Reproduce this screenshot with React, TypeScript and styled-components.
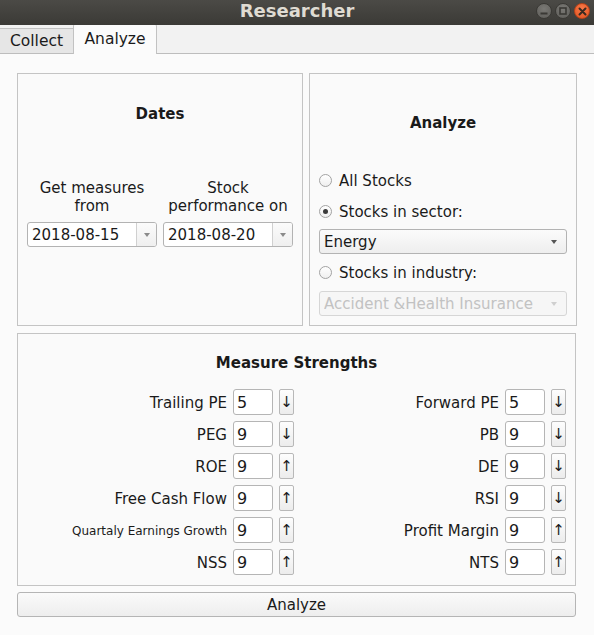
import React from "react";
import styled, { createGlobalStyle, css } from "styled-components";

const Global = createGlobalStyle`
  html, body { margin: 0; padding: 0; background: #fbfbfb; }
  body { font-family: "DejaVu Sans", "Liberation Sans", sans-serif; font-size: 15px; color: #1a1a1a; }
  * { box-sizing: border-box; }
`;

const Window = styled.div`
  width: 594px;
  height: 635px;
  display: flex;
  flex-direction: column;
  background: #fbfbfb;
  overflow: hidden;
`;

const TitleBar = styled.div`
  height: 25px;
  flex: none;
  background: linear-gradient(#4b4a46, #3b3a36);
  display: flex;
  align-items: center;
  justify-content: center;
  position: relative;
`;

const Title = styled.div`
  font-weight: bold;
  font-size: 18px;
  color: #dfdbd2;
  line-height: 20px;
  margin-top: -4px;
`;

const WinButtons = styled.div`
  position: absolute;
  right: 4px;
  top: 3px;
  display: flex;
  gap: 3px;
`;

const WinButton = styled.div<{ $close?: boolean }>`
  width: 16px;
  height: 16px;
  border-radius: 50%;
  display: flex;
  align-items: center;
  justify-content: center;
  ${(p) =>
    p.$close
      ? css`background: radial-gradient(circle at 50% 35%, #f77a4a, #e2531f); border: 1px solid #b8431a;`
      : css`background: radial-gradient(circle at 50% 35%, #7a7975, #5d5c58); border: 1px solid #3a3935;`}
`;

const TabBar = styled.div`
  height: 29px;
  flex: none;
  display: flex;
  align-items: flex-end;
  border-bottom: 1px solid #bdbdbd;
  background: #f2f2f2;
`;

const Tab = styled.div<{ $active?: boolean }>`
  display: flex;
  align-items: center;
  justify-content: center;
  font-size: 15.5px;
  border: 1px solid #c2c2c2;
  border-bottom: none;
  ${(p) =>
    p.$active
      ? css`
          height: 30px;
          width: 84px;
          background: #fbfbfb;
          margin-bottom: -1px;
          border-radius: 2px 2px 0 0;
          padding-bottom: 2px;
        `
      : css`
          height: 25px;
          width: 73px;
          background: #e6e6e6;
          border-left: none;
          border-right: none;
        `}
`;

const Content = styled.div`
  flex: 1;
  padding: 19px 18px 0 17px;
  display: flex;
  flex-direction: column;
`;

const TopRow = styled.div`
  display: grid;
  grid-template-columns: 286px 268px;
  gap: 6px;
  height: 253px;
`;

const Group = styled.div`
  border: 1px solid #c4c4c4;
  background: #fafafa;
  display: flex;
  flex-direction: column;
`;

const DatesGroup = styled(Group)`
  padding: 31px 9px 0 9px;
`;

const AnalyzeGroup = styled(Group)`
  padding: 40px 9px 0 9px;
`;

const GroupTitle = styled.div`
  font-weight: bold;
  font-size: 15px;
  line-height: 18px;
  text-align: center;
`;

const DateCols = styled.div`
  display: grid;
  grid-template-columns: 130px 130px;
  gap: 6px;
  margin-top: 56px;
`;

const DateCol = styled.div`
  display: flex;
  flex-direction: column;
  gap: 7px;
`;

const DateLabel = styled.div`
  text-align: center;
  font-size: 15px;
  line-height: 18px;
`;

const Combo = styled.div<{ $variant?: "plain" | "button" | "disabled" }>`
  height: 25px;
  border-radius: 3px;
  display: flex;
  align-items: center;
  font-size: 15px;
  padding-left: 4px;
  ${(p) =>
    p.$variant === "button"
      ? css`
          border: 1px solid #b3b3b3;
          background: linear-gradient(#fbfbfb, #eeeeee);
          padding-right: 9px;
        `
      : p.$variant === "disabled"
      ? css`
          border: 1px solid #d6d6d6;
          background: #f6f6f6;
          color: #c2c2c2;
          padding-right: 9px;
        `
      : css`
          border: 1px solid #b3b3b3;
          background: #ffffff;
        `}
`;

const ComboText = styled.div`
  flex: 1;
  white-space: nowrap;
  overflow: hidden;
`;

const ComboArrowBox = styled.div`
  width: 20px;
  align-self: stretch;
  border-left: 1px solid #d0d0d0;
  background: linear-gradient(#fbfbfb, #efefef);
  border-radius: 0 2px 2px 0;
  display: flex;
  align-items: center;
  justify-content: center;
`;

const Triangle = styled.div<{ $color?: string }>`
  width: 0;
  height: 0;
  border-left: 3.5px solid transparent;
  border-right: 3.5px solid transparent;
  border-top: 4px solid ${(p) => p.$color || "#6e6e6e"};
`;

const RadioRow = styled.label<{ $mt: number }>`
  display: flex;
  align-items: center;
  gap: 7px;
  height: 22px;
  padding-top: 2px;
  margin-top: ${(p) => p.$mt}px;
  font-size: 15px;
`;

const RadioCircle = styled.span<{ $checked?: boolean }>`
  width: 13px;
  height: 13px;
  border-radius: 50%;
  border: 1px solid #a3a3a3;
  background: linear-gradient(#ffffff, #efefef);
  display: flex;
  align-items: center;
  justify-content: center;
  margin-top: -2px;
  &::after {
    content: "";
    width: 5px;
    height: 5px;
    border-radius: 50%;
    background: ${(p) => (p.$checked ? "#3a3a3a" : "transparent")};
  }
`;

const ComboSlot = styled.div<{ $mt: number }>`
  margin-top: ${(p) => p.$mt}px;
`;

const MeasureGroup = styled(Group)`
  margin-top: 7px;
  height: 253px;
  padding: 20px 9px 0 9px;
`;

const MeasureGrid = styled.div`
  display: grid;
  grid-template-columns: 267px 267px;
  column-gap: 5px;
  row-gap: 6px;
  margin-top: 17px;
`;

const MeasureRow = styled.div`
  display: flex;
  align-items: center;
  height: 26px;
`;

const MeasureLabel = styled.div<{ $small?: boolean }>`
  flex: 1;
  text-align: right;
  font-size: ${(p) => (p.$small ? "12px" : "15px")};
  white-space: nowrap;
  padding-right: 6px;
  padding-top: 2px;
`;

const NumInput = styled.div`
  width: 40px;
  height: 26px;
  border: 1px solid #b5b5b5;
  border-radius: 3px;
  background: #ffffff;
  font-size: 16px;
  display: flex;
  align-items: center;
  padding-left: 3px;
`;

const ArrowButton = styled.div`
  width: 15px;
  height: 26px;
  margin-left: 6px;
  border: 1px solid #b8b8b8;
  border-radius: 2px;
  background: linear-gradient(#fdfdfd, #ececec);
  display: flex;
  align-items: center;
  justify-content: center;
  font-size: 15px;
  color: #1a1a1a;
`;

const BigButton = styled.div`
  margin-top: 6px;
  height: 25px;
  border: 1px solid #b5b5b5;
  border-radius: 3px;
  background: linear-gradient(#fafafa, #eeeeee);
  display: flex;
  align-items: center;
  justify-content: center;
  font-size: 15px;
`;

type M = { label: string; value: string; up: boolean; small?: boolean };

const measures: M[] = [
  { label: "Trailing PE", value: "5", up: false },
  { label: "Forward PE", value: "5", up: false },
  { label: "PEG", value: "9", up: false },
  { label: "PB", value: "9", up: false },
  { label: "ROE", value: "9", up: true },
  { label: "DE", value: "9", up: false },
  { label: "Free Cash Flow", value: "9", up: true },
  { label: "RSI", value: "9", up: false },
  { label: "Quartaly Earnings Growth", value: "9", up: true, small: true },
  { label: "Profit Margin", value: "9", up: true },
  { label: "NSS", value: "9", up: true },
  { label: "NTS", value: "9", up: true },
];

export default function App() {
  return (
    <>
      <Global />
      <Window>
        <TitleBar>
          <Title>Researcher</Title>
          <WinButtons>
            <WinButton>
              <svg width="8" height="8" viewBox="0 0 8 8">
                <rect x="0.5" y="5.5" width="7" height="2" fill="#3a3935" />
              </svg>
            </WinButton>
            <WinButton>
              <svg width="8" height="8" viewBox="0 0 8 8">
                <rect x="1" y="1" width="6" height="6" fill="none" stroke="#3a3935" strokeWidth="1.6" />
              </svg>
            </WinButton>
            <WinButton $close>
              <svg width="9" height="9" viewBox="0 0 9 9">
                <path d="M1.5 1.5 L7.5 7.5 M7.5 1.5 L1.5 7.5" stroke="#3a2a20" strokeWidth="2" strokeLinecap="round" />
              </svg>
            </WinButton>
          </WinButtons>
        </TitleBar>
        <TabBar>
          <Tab>Collect</Tab>
          <Tab $active>Analyze</Tab>
        </TabBar>
        <Content>
          <TopRow>
            <DatesGroup>
              <GroupTitle>Dates</GroupTitle>
              <DateCols>
                <DateCol>
                  <DateLabel>
                    Get measures
                    <br />
                    from
                  </DateLabel>
                  <Combo>
                    <ComboText>2018-08-15</ComboText>
                    <ComboArrowBox>
                      <Triangle $color="#8a8a8a" />
                    </ComboArrowBox>
                  </Combo>
                </DateCol>
                <DateCol>
                  <DateLabel>
                    Stock
                    <br />
                    performance on
                  </DateLabel>
                  <Combo>
                    <ComboText>2018-08-20</ComboText>
                    <ComboArrowBox>
                      <Triangle $color="#8a8a8a" />
                    </ComboArrowBox>
                  </Combo>
                </DateCol>
              </DateCols>
            </DatesGroup>
            <AnalyzeGroup>
              <GroupTitle>Analyze</GroupTitle>
              <RadioRow $mt={37}>
                <RadioCircle />
                All Stocks
              </RadioRow>
              <RadioRow $mt={9}>
                <RadioCircle $checked />
                Stocks in sector:
              </RadioRow>
              <ComboSlot $mt={7}>
                <Combo $variant="button">
                  <ComboText>Energy</ComboText>
                  <Triangle $color="#555" />
                </Combo>
              </ComboSlot>
              <RadioRow $mt={7}>
                <RadioCircle />
                Stocks in industry:
              </RadioRow>
              <ComboSlot $mt={8}>
                <Combo $variant="disabled">
                  <ComboText>Accident &amp;Health Insurance</ComboText>
                  <Triangle $color="#cfcfcf" />
                </Combo>
              </ComboSlot>
            </AnalyzeGroup>
          </TopRow>
          <MeasureGroup>
            <GroupTitle>Measure Strengths</GroupTitle>
            <MeasureGrid>
              {measures.map((m) => (
                <MeasureRow key={m.label}>
                  <MeasureLabel $small={m.small}>{m.label}</MeasureLabel>
                  <NumInput>{m.value}</NumInput>
                  <ArrowButton>{m.up ? "↑" : "↓"}</ArrowButton>
                </MeasureRow>
              ))}
            </MeasureGrid>
          </MeasureGroup>
          <BigButton>Analyze</BigButton>
        </Content>
      </Window>
    </>
  );
}
